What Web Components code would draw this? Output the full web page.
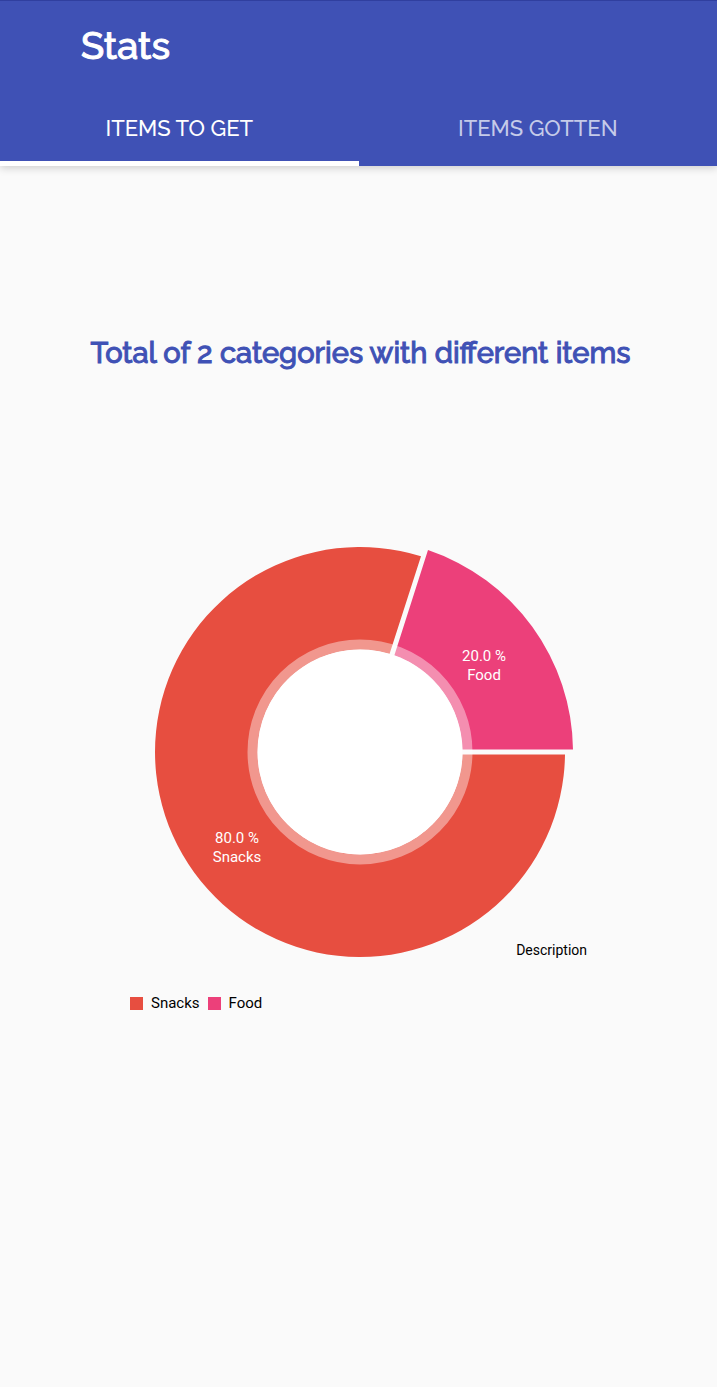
<!DOCTYPE html>
<html lang="en">
<head>
<meta charset="utf-8">
<meta name="viewport" content="width=device-width, initial-scale=1">
<title>Stats</title>
<style>
  body { margin: 0; background: #fafafa; font-family: Roboto, sans-serif; }
</style>
</head>
<body>
<stats-page></stats-page>

<script>
  const define = (name, html) => {
    const template = document.createElement('template');
    template.innerHTML = html;
    customElements.define(name, class extends HTMLElement {
      constructor() {
        super();
        this.attachShadow({ mode: 'open' }).append(template.content.cloneNode(true));
      }
    });
  };

  define('app-bar', `
    <style>
      :host {
        display: block;
        position: relative;
        background: #3f51b5;
        border-top: 1px solid #303f9f;
        box-shadow: 0 2px 8px rgba(0, 0, 0, .18);
        color: #fff;
        font-family: Raleway, Lato, sans-serif;
      }
      h1 { margin: 0; padding: 21px 81px 19px; font-size: 38px; line-height: 48px; font-weight: 500; -webkit-text-stroke: 1px currentColor; }
    </style>
    <h1><slot name="title"></slot></h1>
    <slot></slot>
  `);

  define('tab-strip', `
    <style>
      :host { display: block; }
      div { display: grid; grid-template-columns: 1fr 1fr; }
      button {
        margin: 0;
        padding: 25px 0 19px;
        border: 0;
        border-bottom: 5px solid transparent;
        background: none;
        color: #c5cbe9;
        font: 500 22px/28px Raleway, Lato, sans-serif;
        text-transform: uppercase;
      }
      button[aria-selected="true"] { color: #fff; border-bottom-color: #fff; }
    </style>
    <div role="tablist">
      <button type="button" role="tab" aria-selected="true">Items to get</button>
      <button type="button" role="tab" aria-selected="false">Items gotten</button>
    </div>
  `);

  define('legend-item', `
    <style>
      :host { display: flex; align-items: center; gap: 8px; font-size: 15px; line-height: 20px; }
      i { width: 13px; height: 13px; background: var(--swatch); }
    </style>
    <i></i><slot></slot>
  `);

  define('pie-chart', `
    <style>
      :host { display: block; width: min(100% - 32px, 457px); margin: 0 auto; color: #000; }
      figure { margin: 0; display: grid; }
      svg { display: block; width: 100%; height: auto; }
      svg, figcaption { grid-area: 1 / 1; }
      figcaption { place-self: end; padding-bottom: 10px; font-size: 14px; line-height: 20px; }
      text { fill: #fff; font-size: 15px; text-anchor: middle; }
      .legend { display: flex; gap: 8px; padding-top: 23px; }
    </style>
    <figure>
      <svg viewBox="-230 -212 457 430" role="img" aria-label="Snacks 80%, Food 20%">
        <path fill="#e74e40" d="M205 2.5 A205 205 0 1 1 61 -195.7 L29.6 -98.2 A102.5 102.5 0 1 0 102.5 2.5Z"/>
        <path fill="#ec407a" d="M68 -201.9 A213 213 0 0 1 213 -2.5 H102.5 A102.5 102.5 0 0 0 34.4 -96.7Z"/>
        <circle r="107.5" fill="none" stroke="#fff" stroke-opacity=".41" stroke-width="10"/>
        <circle r="102.5" fill="#fff"/>
        <text x="124" y="-91">20.0 %</text>
        <text x="124" y="-72">Food</text>
        <text x="-123" y="91">80.0 %</text>
        <text x="-123" y="110">Snacks</text>
      </svg>
      <figcaption>Description</figcaption>
    </figure>
    <div class="legend">
      <legend-item style="--swatch: #e74e40">Snacks</legend-item>
      <legend-item style="--swatch: #ec407a">Food</legend-item>
    </div>
  `);

  define('stats-page', `
    <style>
      :host { display: block; min-height: 100vh; }
      h2 {
        margin: 0;
        padding: 168px 16px 168px 20px;
        color: #3f51b5;
        font: 500 29px/38px Raleway, Lato, sans-serif;
        -webkit-text-stroke: 1px currentColor;
        text-align: center;
      }
    </style>
    <app-bar>
      <span slot="title">Stats</span>
      <tab-strip></tab-strip>
    </app-bar>
    <main>
      <h2>Total of 2 categories with different items</h2>
      <pie-chart></pie-chart>
    </main>
  `);
</script>
</body>
</html>
